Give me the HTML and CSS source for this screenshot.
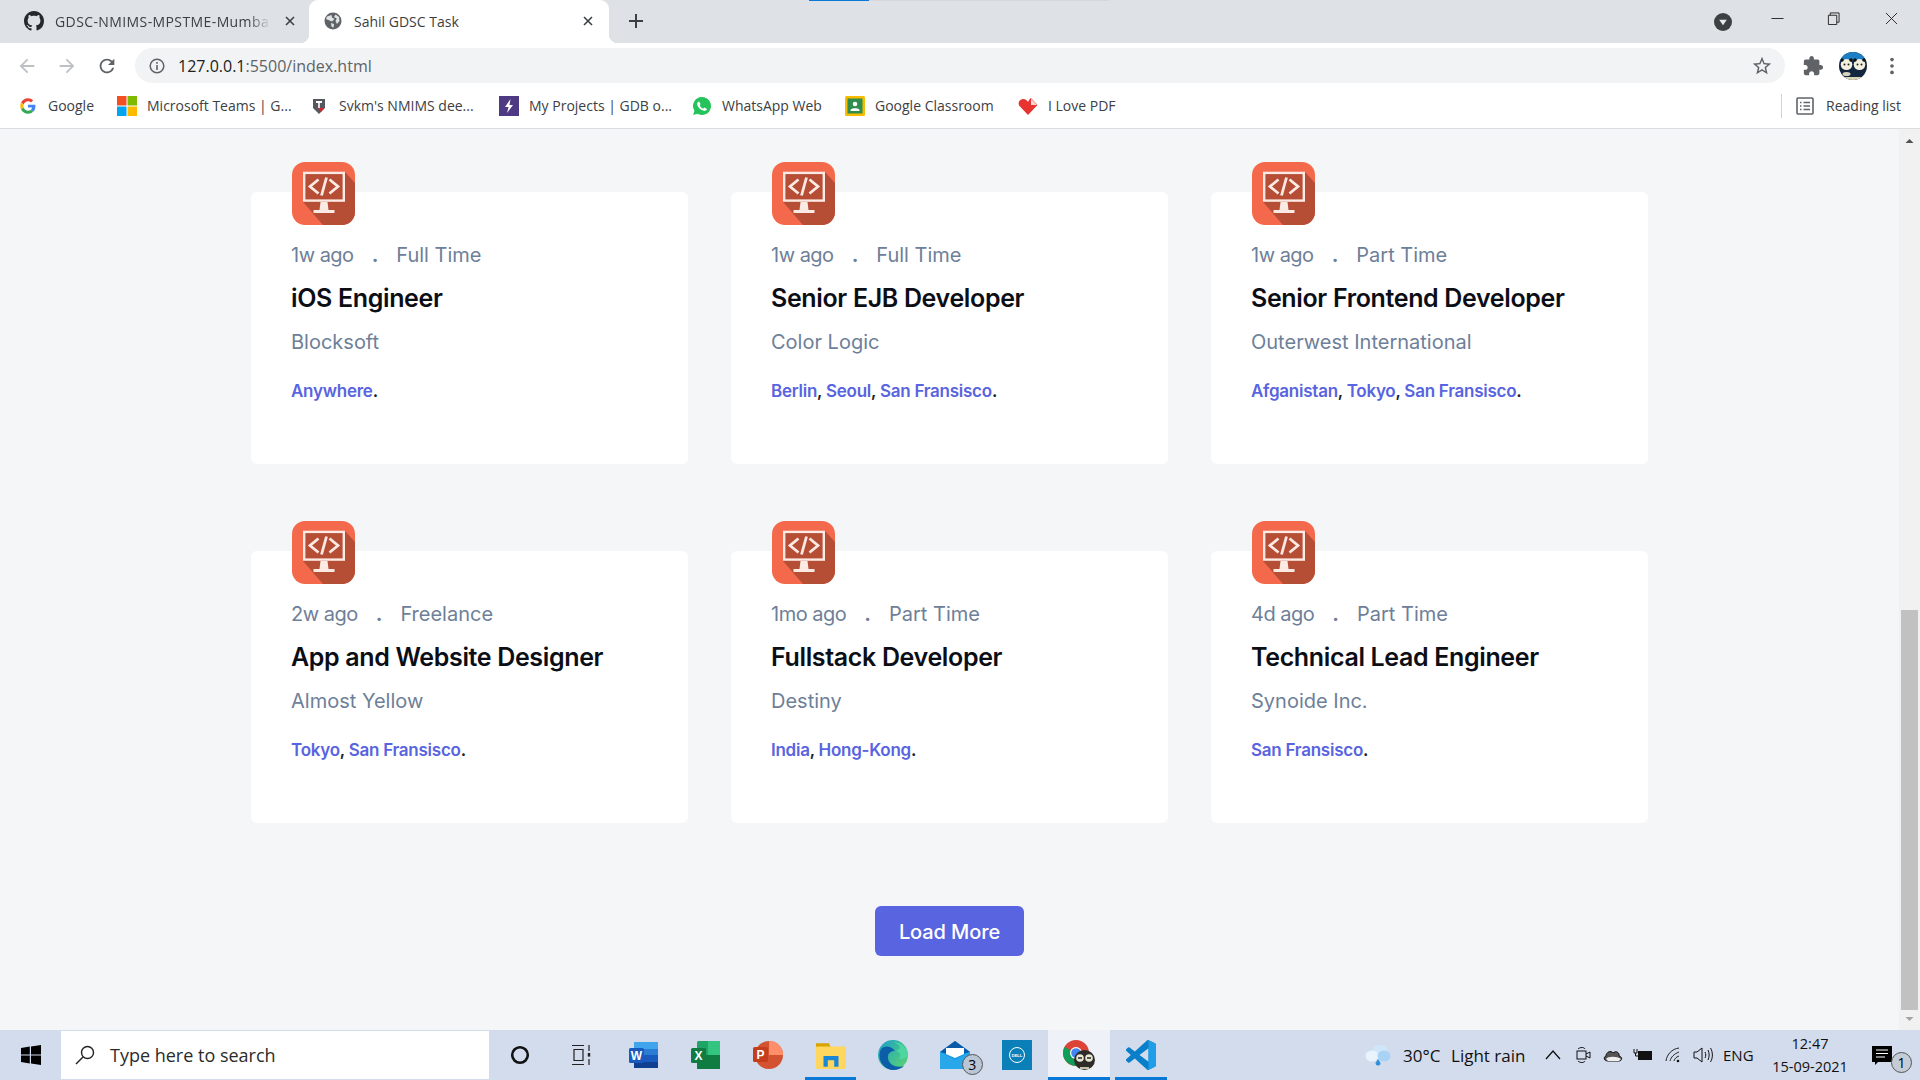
FILE: index.html
```html
<!DOCTYPE html>
<html lang="en">
<head>
<meta charset="utf-8">
<title>Sahil GDSC Task</title>
<link rel="stylesheet" href="styles.css">
</head>
<body>
<svg class="defs" width="0" height="0" aria-hidden="true">
  <symbol id="job" viewBox="0 0 63 63">
    <clipPath id="jobclip"><rect width="63" height="63" rx="13"/></clipPath>
    <g clip-path="url(#jobclip)">
      <rect width="63" height="63" fill="#f4694b"/>
      <path d="M53 10L63 21V63H31L11 40V38H53Z" fill="#b54e35"/>
      <path d="M57 63L63 55V63Z" fill="#5a3a2e"/>
    </g>
    <rect x="12.200" y="10.900" width="39.600" height="27.700" fill="#b54e35" stroke="#fbe9e3" stroke-width="2.400"/>
    <path d="M26.500 17.500L18 24.500L26.500 31.500M37.500 17.500L46 24.500L37.500 31.500M34.500 15.500L29.500 33.500" fill="none" stroke="#fbe9e3" stroke-width="2.800"/>
    <path d="M28.500 40H35.500L36.500 48H27.500Z" fill="#fbe9e3"/>
    <rect x="21.500" y="48" width="21" height="3" fill="#fbe9e3"/>
  </symbol>
</svg>

<header class="tabstrip">
  <div class="tab tab-inactive">
    <svg class="tab-icon" viewBox="0 0 16 16"><path fill="#24292e" d="M8 0C3.58 0 0 3.58 0 8c0 3.54 2.29 6.53 5.47 7.59.4.07.55-.17.55-.38 0-.19-.01-.82-.01-1.49-2.01.37-2.53-.49-2.69-.94-.09-.23-.48-.94-.82-1.13-.28-.15-.68-.52-.01-.53.63-.01 1.08.58 1.23.82.72 1.21 1.87.87 2.33.66.07-.52.28-.87.51-1.07-1.78-.2-3.64-.89-3.64-3.95 0-.87.31-1.59.82-2.15-.08-.2-.36-1.02.08-2.12 0 0 .67-.21 2.2.82.64-.18 1.32-.27 2-.27.68 0 1.36.09 2 .27 1.53-1.04 2.2-.82 2.2-.82.44 1.1.16 1.92.08 2.12.51.56.82 1.27.82 2.15 0 3.07-1.87 3.75-3.65 3.95.29.25.54.73.54 1.48 0 1.07-.01 1.93-.01 2.2 0 .21.15.46.55.38A8.013 8.013 0 0016 8c0-4.42-3.58-8-8-8z"/></svg>
    <span class="tab-title tab-title-fade">GDSC-NMIMS-MPSTME-Mumbai</span>
    <svg class="tab-close" viewBox="0 0 10 10"><path d="M1 1L9 9M9 1L1 9" stroke="#3c4043" stroke-width="1.600"/></svg>
  </div>
  <div class="tab tab-active">
    <svg class="tab-icon" viewBox="0 0 18 18"><circle cx="9" cy="9" r="8.500" fill="#5f6368"/><path d="M3 4.500L7.500 3L8 5.500L10.500 7L8 9.500L5.500 8.500L2 7ZM11.500 2.500L15 5L15.500 9L13 12L11.500 9L12.800 6.500L10 5ZM7 11L10 12L9.500 15.800L7.500 14.500Z" fill="#dfe1e5"/></svg>
    <span class="tab-title">Sahil GDSC Task</span>
    <svg class="tab-close" viewBox="0 0 10 10"><path d="M1 1L9 9M9 1L1 9" stroke="#3c4043" stroke-width="1.600"/></svg>
  </div>
  <svg class="new-tab" viewBox="0 0 14 14"><path d="M7 0V14M0 7H14" stroke="#3c4043" stroke-width="2"/></svg>
  <div class="tabstrip-right">
    <svg class="tab-search" viewBox="0 0 18 18"><circle cx="9" cy="9" r="9" fill="#3c4043"/><path d="M5.200 6.800H12.800L9 12.200Z" fill="#e8eaed"/></svg>
    <svg class="win-btn" viewBox="0 0 14 14"><path d="M0.500 7H13.500" stroke="#222" stroke-width="1"/></svg>
    <svg class="win-btn win-restore" viewBox="0 0 14 14"><path d="M1.500 3.500H10.500V13.500H1.500ZM3.500 3.500V1H13V11H10.500" fill="none" stroke="#222" stroke-width="1"/></svg>
    <svg class="win-btn win-close" viewBox="0 0 14 14"><path d="M1 1L13 13M13 1L1 13" stroke="#222" stroke-width="1"/></svg>
  </div>
  <div class="progress"><span class="progress-bar"></span></div>
</header>

<div class="toolbar">
  <button class="tool"><svg viewBox="0 0 24 24"><path fill="#bdc1c6" d="M20 11H7.830l5.590-5.590L12 4l-8 8 8 8 1.410-1.410L7.830 13H20v-2z"/></svg></button>
  <button class="tool"><svg viewBox="0 0 24 24"><path fill="#bdc1c6" d="M12 4l-1.410 1.410L16.170 11H4v2h12.170l-5.580 5.590L12 20l8-8z"/></svg></button>
  <button class="tool"><svg viewBox="0 0 24 24"><path fill="#5f6368" d="M17.65 6.35A7.958 7.958 0 0012 4c-4.42 0-7.99 3.58-7.99 8s3.57 8 7.99 8c3.73 0 6.84-2.55 7.73-6h-2.08A5.99 5.99 0 0112 18c-3.31 0-6-2.69-6-6s2.69-6 6-6c1.66 0 3.14.69 4.22 1.78L13 11h7V4l-2.35 2.35z"/></svg></button>
  <div class="omnibox">
    <svg class="omni-info" viewBox="0 0 16 16"><circle cx="8" cy="8" r="6.800" fill="none" stroke="#5f6368" stroke-width="1.500"/><path d="M8 7V12M8 4V5.800" stroke="#5f6368" stroke-width="1.600"/></svg>
    <span class="url"><span class="url-host">127.0.0.1</span>:5500/index.html</span>
    <svg class="omni-star" viewBox="0 0 24 24"><path fill="#5f6368" d="M22 9.24l-7.19-.62L12 2 9.19 8.63 2 9.24l5.46 4.73L5.82 21 12 17.27 18.18 21l-1.63-7.03L22 9.24zM12 15.4l-3.76 2.27 1-4.28-3.32-2.88 4.38-.38L12 6.1l1.71 4.04 4.38.38-3.32 2.88 1 4.28L12 15.4z"/></svg>
  </div>
  <div class="toolbar-right">
    <button class="tool"><svg viewBox="0 0 24 24"><path fill="#5f6368" d="M20.5 11H19V7c0-1.1-.9-2-2-2h-4V3.5C13 2.12 11.88 1 10.5 1S8 2.12 8 3.5V5H4c-1.1 0-1.99.9-1.99 2v3.8H3.5c1.49 0 2.7 1.21 2.7 2.7s-1.21 2.7-2.7 2.7H2V20c0 1.1.9 2 2 2h3.8v-1.5c0-1.49 1.21-2.7 2.7-2.7 1.49 0 2.7 1.21 2.7 2.7V22H17c1.1 0 2-.9 2-2v-4h1.5c1.38 0 2.5-1.12 2.5-2.5S21.88 11 20.5 11z"/></svg></button>
    <button class="tool"><svg class="avatar" viewBox="0 0 28 28">
      <clipPath id="avclip"><circle cx="14" cy="14" r="14"/></clipPath>
      <g clip-path="url(#avclip)"><rect width="28" height="28" fill="#12263f"/><rect width="28" height="9" fill="#1a7fc4"/>
      <ellipse cx="7.500" cy="12.500" rx="5.800" ry="5.500" fill="#f4f0de"/><ellipse cx="20.500" cy="12.500" rx="5.800" ry="5.500" fill="#f4f0de"/>
      <circle cx="3" cy="8" r="1.800" fill="#111"/><circle cx="12" cy="8" r="1.800" fill="#111"/><circle cx="16" cy="8" r="1.800" fill="#111"/><circle cx="25" cy="8" r="1.800" fill="#111"/>
      <circle cx="5.500" cy="12.500" r="1" fill="#222"/><circle cx="9.500" cy="12.500" r="1" fill="#222"/><circle cx="18.500" cy="12.500" r="1" fill="#222"/><circle cx="22.500" cy="12.500" r="1" fill="#222"/>
      <ellipse cx="7.500" cy="22" rx="4" ry="2" fill="#d8d4bc"/><rect x="6" y="25" width="16" height="3" fill="#d9d4b4"/></g></svg></button>
    <button class="tool tool-last"><svg viewBox="0 0 24 24"><circle cx="12" cy="5" r="2" fill="#5f6368"/><circle cx="12" cy="12" r="2" fill="#5f6368"/><circle cx="12" cy="19" r="2" fill="#5f6368"/></svg></button>
  </div>
</div>

<nav class="bookmarks">
  <a class="bm"><svg class="bm-icon" viewBox="-7 -7 62 62"><path fill="#EA4335" d="M24 9.5c3.54 0 6.71 1.22 9.21 3.6l6.85-6.85C35.9 2.38 30.47 0 24 0 14.62 0 6.51 5.38 2.56 13.22l7.98 6.19C12.43 13.72 17.74 9.5 24 9.5z"/><path fill="#4285F4" d="M46.98 24.55c0-1.57-.15-3.09-.38-4.55H24v9.02h12.94c-.58 2.96-2.26 5.48-4.78 7.18l7.73 6c4.51-4.18 7.09-10.36 7.09-17.65z"/><path fill="#FBBC05" d="M10.53 28.59c-.48-1.45-.76-2.99-.76-4.59s.27-3.14.76-4.59l-7.98-6.19C.92 16.46 0 20.12 0 24c0 3.88.92 7.54 2.56 10.78l7.97-6.19z"/><path fill="#34A853" d="M24 48c6.48 0 11.93-2.13 15.89-5.81l-7.73-6c-2.15 1.45-4.92 2.3-8.16 2.3-6.26 0-11.57-4.22-13.47-9.91l-7.98 6.19C6.51 42.62 14.62 48 24 48z"/></svg><span>Google</span></a>
  <a class="bm"><svg class="bm-icon" viewBox="0 0 20 20"><rect width="9.500" height="9.500" fill="#f25022"/><rect x="10.500" width="9.500" height="9.500" fill="#7fba00"/><rect y="10.500" width="9.500" height="9.500" fill="#00a4ef"/><rect x="10.500" y="10.500" width="9.500" height="9.500" fill="#ffb900"/></svg><span>Microsoft Teams | G...</span></a>
  <a class="bm"><svg class="bm-icon" viewBox="0 0 20 20"><path d="M4 3H16V12L10 18L4 12Z" fill="#55585e"/><rect x="7" y="5" width="6" height="2" fill="#fff"/><rect x="9" y="7" width="2" height="5" fill="#ddd"/><path d="M9 12H15L12 16Z" fill="#d9232e"/></svg><span>Svkm's NMIMS dee...</span></a>
  <a class="bm"><svg class="bm-icon" viewBox="0 0 20 20"><rect width="20" height="20" fill="#4e3a82"/><path d="M11.500 3L6 11H9.500L8 17L14 9H10.500Z" fill="#fff"/></svg><span>My Projects | GDB o...</span></a>
  <a class="bm"><svg class="bm-icon" viewBox="0 0 20 20"><path d="M10 1A9 9 0 0 0 2.400 14.800L1.200 19L5.500 17.800A9 9 0 1 0 10 1Z" fill="#25c35b"/><path d="M7 5.500L8.600 8L7.800 9.400C8.600 11 9.600 12 11.200 12.600L12.500 11.600L15 13C14.600 14.600 13 15.200 11.600 14.800C8.400 14 6 11.600 5.200 8.800C4.800 7.400 5.600 6 7 5.500Z" fill="#fff"/></svg><span>WhatsApp Web</span></a>
  <a class="bm"><svg class="bm-icon" viewBox="0 0 20 20"><rect width="20" height="20" rx="1.500" fill="#f8bd00"/><rect x="2.500" y="2.500" width="15" height="15" fill="#2f8d4e"/><circle cx="10" cy="8" r="2.300" fill="#fff"/><path d="M5.500 14C5.500 11.600 14.500 11.600 14.500 14V15H5.500Z" fill="#fff"/></svg><span>Google Classroom</span></a>
  <a class="bm"><svg class="bm-icon" viewBox="0 0 20 20"><path d="M10 19L1.500 10C-.5 7.500 1 3 5 3C7.200 3 9 4.200 10 6C11 4.200 11.500 3 13 2L19.500 9L10 19Z" fill="#e73431"/><path d="M13 2.500L19 9H13Z" fill="#fbd6d2"/></svg><span>I Love PDF</span></a>
  <a class="bm bm-reading"><svg class="bm-icon bm-icon-list" viewBox="0 0 18 18"><rect x="1" y="1" width="16" height="16" rx="1" fill="none" stroke="#5f6368" stroke-width="1.600"/><path d="M4 5.500H5.500M4 9H5.500M4 12.500H5.500M7.500 5.500H14M7.500 9H14M7.500 12.500H14" stroke="#5f6368" stroke-width="1.500"/></svg><span>Reading list</span></a>
</nav>

<div class="viewport">
  <main class="page">
    <section class="jobs">
      <article class="job">
        <svg class="job-logo"><use href="#job"/></svg>
        <p class="job-meta"><span class="job-age">1w ago</span><span class="dot">.</span><span>Full Time</span></p>
        <h2 class="job-title">iOS Engineer</h2>
        <p class="job-company">Blocksoft</p>
        <p class="job-places"><a>Anywhere</a>.</p>
      </article>
      <article class="job">
        <svg class="job-logo"><use href="#job"/></svg>
        <p class="job-meta"><span class="job-age">1w ago</span><span class="dot">.</span><span>Full Time</span></p>
        <h2 class="job-title">Senior EJB Developer</h2>
        <p class="job-company">Color Logic</p>
        <p class="job-places"><a>Berlin</a>, <a>Seoul</a>, <a>San Fransisco</a>.</p>
      </article>
      <article class="job">
        <svg class="job-logo"><use href="#job"/></svg>
        <p class="job-meta"><span class="job-age">1w ago</span><span class="dot">.</span><span>Part Time</span></p>
        <h2 class="job-title">Senior Frontend Developer</h2>
        <p class="job-company">Outerwest International</p>
        <p class="job-places"><a>Afganistan</a>, <a>Tokyo</a>, <a>San Fransisco</a>.</p>
      </article>
      <article class="job">
        <svg class="job-logo"><use href="#job"/></svg>
        <p class="job-meta"><span class="job-age">2w ago</span><span class="dot">.</span><span>Freelance</span></p>
        <h2 class="job-title">App and Website Designer</h2>
        <p class="job-company">Almost Yellow</p>
        <p class="job-places"><a>Tokyo</a>, <a>San Fransisco</a>.</p>
      </article>
      <article class="job">
        <svg class="job-logo"><use href="#job"/></svg>
        <p class="job-meta"><span class="job-age">1mo ago</span><span class="dot">.</span><span>Part Time</span></p>
        <h2 class="job-title">Fullstack Developer</h2>
        <p class="job-company">Destiny</p>
        <p class="job-places"><a>India</a>, <a>Hong-Kong</a>.</p>
      </article>
      <article class="job">
        <svg class="job-logo"><use href="#job"/></svg>
        <p class="job-meta"><span class="job-age">4d ago</span><span class="dot">.</span><span>Part Time</span></p>
        <h2 class="job-title">Technical Lead Engineer</h2>
        <p class="job-company">Synoide Inc.</p>
        <p class="job-places"><a>San Fransisco</a>.</p>
      </article>
    </section>
    <button class="load-more">Load More</button>
  </main>
  <aside class="scrollbar">
    <svg class="sb-arrow" viewBox="0 0 10 5"><path d="M0 5L5 0L10 5Z" fill="#505050"/></svg>
    <div class="sb-track"><div class="sb-thumb"></div></div>
    <svg class="sb-arrow" viewBox="0 0 10 5"><path d="M0 0L5 5L10 0Z" fill="#a3a3a3"/></svg>
  </aside>
</div>

<footer class="taskbar">
  <div class="start"><svg viewBox="0 0 20 20"><path fill="#000" d="M0 3L8.800 1.600V9.500H0ZM10 1.400L20 0V9.500H10ZM0 10.600H8.800V18.400L0 17ZM10 10.600H20V20L10 18.600Z"/></svg></div>
  <div class="search">
    <svg class="search-icon" viewBox="0 0 20 20"><circle cx="12.500" cy="7.500" r="6" fill="none" stroke="#222" stroke-width="1.400"/><path d="M8 12L1 19" stroke="#222" stroke-width="1.500"/></svg>
    <span>Type here to search</span>
  </div>
  <div class="slot"><svg class="ic-cortana" viewBox="0 0 20 20"><circle cx="10" cy="10" r="7.800" fill="none" stroke="#111" stroke-width="2.600"/></svg></div>
  <div class="slot"><svg class="ic-task" viewBox="0 0 22 22"><path d="M1 1.500H13M1 20.500H13M3 5.500H12V16.500H3ZM18 1V7M18 15V21" fill="none" stroke="#222" stroke-width="1.200"/><rect x="16.800" y="9" width="2.400" height="3.600" fill="#222"/></svg></div>
  <div class="slot"><svg class="ic-app" viewBox="0 0 30 30"><rect x="5" y="2" width="24" height="26" rx="1.500" fill="#2b7cd3"/><rect x="5" y="2" width="24" height="7" fill="#41a5ee"/><rect x="5" y="15" width="24" height="7" fill="#185abd"/><rect x="5" y="22" width="24" height="6" fill="#103f91"/><rect x="0" y="8" width="15" height="15" rx="1.500" fill="#185abd"/><text class="ic-letter" x="7.500" y="20">W</text></svg></div>
  <div class="slot"><svg class="ic-app" viewBox="0 0 30 30"><rect x="6" y="1" width="23" height="28" rx="1.500" fill="#21a366"/><rect x="17" y="1" width="12" height="14" fill="#33c481"/><rect x="6" y="15" width="23" height="14" fill="#107c41"/><rect x="0" y="8" width="15" height="15" rx="1.500" fill="#107c41"/><text class="ic-letter" x="7.500" y="20">X</text></svg></div>
  <div class="slot"><svg class="ic-app" viewBox="0 0 30 30"><circle cx="16" cy="15" r="14" fill="#d35230"/><path d="M16 1A14 14 0 0 1 30 15H16Z" fill="#ff8f6b"/><rect x="0" y="7" width="15" height="15" rx="1.500" fill="#c43e1c"/><text class="ic-letter" x="7.500" y="19">P</text></svg></div>
  <div class="slot slot-open"><svg class="ic-app" viewBox="0 0 28 28"><path d="M0 3H12L14 7H0Z" fill="#d9a300"/><rect y="6" width="28" height="21" rx="1" fill="#ffd75e"/><path d="M7 25V15H21V25H17V19H11V25Z" fill="#1a86d6"/></svg></div>
  <div class="slot"><svg class="ic-app" viewBox="0 0 30 30"><defs><linearGradient id="edgeg" x1="0" y1="0" x2="1" y2="1"><stop offset="0" stop-color="#1ba0c9"/><stop offset="1" stop-color="#5ed66c"/></linearGradient></defs><circle cx="15" cy="15" r="15" fill="url(#edgeg)"/><path d="M3 9C-2 20 6 30 15 30C20 30 24 28 26 26C20 28 11 26 10 18C9.500 13 13 11 17 11C12 5 6 6 3 9Z" fill="#0d5ea8"/><path d="M17 11C22 11 24 15 21 19C26 19 30 17 30 14C29 7 23 2 15 2C24 5 24 9 17 11Z" fill="#4dd6a0"/></svg></div>
  <div class="slot slot-badge"><svg class="ic-app" viewBox="0 0 30 30"><path d="M0 12L15 1L30 12V29H0Z" fill="#1a9ce8"/><path d="M0 12L15 1L30 12L15 16Z" fill="#0a5aa8"/><path d="M6 8H24V14L15 18L6 14Z" fill="#fff"/><path d="M0 12L15 20L30 12V29H0Z" fill="#28a8ea"/></svg><span class="count">3</span></div>
  <div class="slot"><svg class="ic-app" viewBox="0 0 30 30"><rect width="30" height="30" fill="#0a7fb8"/><circle cx="15" cy="15" r="7.500" fill="none" stroke="#fff" stroke-width="1"/><text class="ic-dell" x="15" y="16.500">DELL</text></svg></div>
  <div class="slot slot-active"><svg class="ic-chrome" viewBox="0 0 32 30"><circle cx="13" cy="13" r="13" fill="#db4437"/><path d="M13 13H26A13 13 0 0 1 13 26Z" fill="#fbbc05"/><path d="M13 13L13 26A13 13 0 0 1 1.500 7Z" fill="#0f9d58"/><circle cx="13" cy="13" r="6" fill="#fff"/><circle cx="13" cy="13" r="4.800" fill="#4285f4"/><ellipse cx="21.500" cy="20" rx="10.500" ry="10" fill="#2d2c28"/><circle cx="17" cy="18" r="3.800" fill="#e9e6d4"/><circle cx="26" cy="18" r="3.800" fill="#e9e6d4"/><circle cx="16" cy="18" r="1" fill="#222"/><circle cx="18" cy="18" r="1" fill="#222"/><circle cx="25" cy="18" r="1" fill="#222"/><circle cx="27" cy="18" r="1" fill="#222"/><rect x="17" y="27" width="9" height="2" fill="#c7c2a6"/></svg></div>
  <div class="slot slot-open"><svg class="ic-app" viewBox="0 0 24 24"><path fill="#0a7fc9" d="M23.15 2.587 18.21.21a1.494 1.494 0 0 0-1.705.29l-9.46 8.63-4.12-3.128a.999.999 0 0 0-1.276.057L.327 7.261A1 1 0 0 0 .326 8.74L3.899 12 .326 15.26a1 1 0 0 0 .001 1.479L1.65 17.94a.999.999 0 0 0 1.276.057l4.12-3.128 9.46 8.63a1.492 1.492 0 0 0 1.704.29l4.942-2.377A1.5 1.5 0 0 0 24 20.06V3.939a1.5 1.5 0 0 0-.85-1.352zm-5.146 14.861L10.826 12l7.178-5.448v10.896z"/><path fill="#1e9ee6" d="M18 .2L23.150 2.587A1.500 1.500 0 0 1 24 3.939V20.060A1.500 1.500 0 0 1 23.150 21.413L18 23.800Z"/></svg></div>

  <div class="tray">
    <svg class="tray-cloud" viewBox="0 0 26 22"><ellipse cx="15" cy="8" rx="8" ry="7" fill="#cfe6fa"/><ellipse cx="7" cy="12" rx="6.500" ry="5.500" fill="#e8f3fc"/><ellipse cx="19" cy="12" rx="6.500" ry="5.500" fill="#a9d3f5"/><path d="M13 15L15.500 19A2.500 2.500 0 1 1 10.500 19Z" fill="#2f8fd8"/></svg>
    <span class="tray-temp">30°C</span>
    <span class="tray-weather">Light rain</span>
    <svg class="tray-ic" viewBox="0 0 18 18"><path d="M2 13L9 5L16 13" fill="none" stroke="#111" stroke-width="1.300"/></svg>
    <svg class="tray-ic" viewBox="0 0 18 18"><rect x="3" y="5" width="9" height="8" fill="none" stroke="#111"/><path d="M12 8L16 6V12L12 10M4 3C6 1 10 1 11 3M4 15C6 17 10 17 11 15" fill="none" stroke="#111"/></svg>
    <svg class="tray-ic" viewBox="0 0 20 18"><path d="M5 15C1 15 0 11 3 10C3 6 8 4 10 7C13 4 17 7 16 10C20 11 19 15 16 15Z" fill="#555" stroke="#111"/><path d="M3 13C5 10 14 10 18 13L16 15H5Z" fill="#eee"/></svg>
    <svg class="tray-ic" viewBox="0 0 20 18"><rect x="5" y="5" width="14" height="9" fill="#111"/><path d="M1 3V7H4V3M2.500 7V10H5" fill="none" stroke="#111"/></svg>
    <svg class="tray-ic" viewBox="0 0 18 18"><path d="M2 15C3 8 8 3 15 2M6 15C7 11 10 8 15 6M10 15C10.500 13 12 11 15 10" fill="none" stroke="#222"/><circle cx="14" cy="15" r="1.300" fill="#111"/></svg>
    <svg class="tray-ic" viewBox="0 0 20 18"><path d="M1 6H4L9 2V16L4 12H1Z" fill="none" stroke="#111"/><path d="M12 6C13 8 13 10 12 12M15 4C16.500 7 16.500 11 15 14M17.500 2C20 6 20 12 17.500 16" fill="none" stroke="#111"/></svg>
    <span class="tray-lang">ENG</span>
    <div class="clock"><span>12:47</span><span>15-09-2021</span></div>
    <div class="notif"><svg viewBox="0 0 20 20"><path d="M0 0H20V16H6L3 19V16H0Z" fill="#000"/><path d="M4 4H16M4 7.500H16M4 11H13" stroke="#fff" stroke-width="1"/></svg><span class="count count-notif">1</span></div>
  </div>
</footer>
</body>
</html>
```

FILE: styles.css
```css
* { box-sizing: border-box; }
html, body { margin: 0; height: 100%; }
body {
  width: 1920px;
  height: 1080px;
  overflow: hidden;
  display: flex;
  flex-direction: column;
  background: #f5f6f8;
  font-family: "Open Sans", "Liberation Sans", sans-serif;
}
.defs { position: absolute; }
svg { display: block; flex: none; }
button { border: 0; background: none; padding: 0; font: inherit; }

/* Browser tab strip */
.tabstrip {
  position: relative;
  height: 43px;
  flex: none;
  display: flex;
  align-items: stretch;
  background: #dee1e6;
  padding-left: 8px;
}
.tab {
  position: relative;
  display: flex;
  align-items: center;
  padding-bottom: 1px;
  font-size: 14px;
  color: #3c4043;
  border-radius: 9px 9px 0 0;
}
.tab-inactive { width: 301px; padding-left: 16px; }
.tab-active { width: 300px; padding-left: 15px; background: #fff; }
.tab-active::before, .tab-active::after {
  content: "";
  position: absolute;
  bottom: 0;
  width: 9px;
  height: 9px;
}
.tab-active::before { left: -9px; background: radial-gradient(circle at 0 0, transparent 9px, #fff 9.5px); }
.tab-active::after { right: -9px; background: radial-gradient(circle at 100% 0, transparent 9px, #fff 9.5px); }
.tab-icon { width: 20px; height: 20px; margin-right: 11px; }
.tab-active .tab-icon { width: 18px; height: 18px; margin-right: 12px; }
.tab-title { flex: 1; white-space: nowrap; overflow: hidden; }
.tab-title-fade {
  letter-spacing: 0.4px;
  -webkit-mask-image: linear-gradient(to right, #000 88%, transparent 98%);
  mask-image: linear-gradient(to right, #000 88%, transparent 98%);
}
.tab-close { width: 10px; height: 10px; margin: 0 16px 0 10px; }
.tab-inactive .tab-close { margin-right: 14px; }
.new-tab { width: 14px; height: 14px; align-self: center; margin: -2px 0 0 20px; }
.tabstrip-right {
  margin-left: auto;
  display: flex;
  align-items: center;
  padding-right: 22px;
}
.tab-search { width: 18px; height: 18px; margin: 1px 39px 0 0; }
.win-btn { width: 13px; height: 13px; margin-top: -6px; }
.win-restore { margin-left: 43px; }
.win-close { margin-left: 45px; }
.progress {
  position: absolute;
  left: 809px;
  top: 0;
  width: 300px;
  height: 1px;
  background: #d5d7db;
}
.progress-bar { display: block; width: 60px; height: 1px; background: #0a78d6; }

/* Toolbar */
.toolbar {
  height: 40px;
  flex: none;
  display: flex;
  align-items: flex-end;
  background: #fff;
  padding-left: 7px;
}
.tool { width: 40px; height: 35px; display: flex; align-items: center; justify-content: center; }
.tool svg { width: 22px; height: 22px; }
.tool-last { width: 38px; }
.tool .avatar { width: 28px; height: 28px; }
.omnibox {
  width: 1650px;
  height: 35px;
  margin-left: 8px;
  display: flex;
  align-items: center;
  padding-left: 14px;
  padding-right: 12px;
  border-radius: 18px;
  background: #f1f3f4;
}
.omni-info { width: 16px; height: 16px; margin-right: 13px; }
.url { font-size: 16px; color: #5f6368; }
.url-host { color: #202124; }
.omni-star { width: 22px; height: 22px; margin-left: auto; }
.toolbar-right { display: flex; margin-left: 8px; }

/* Bookmarks */
.bookmarks {
  height: 46px;
  flex: none;
  display: flex;
  align-items: center;
  padding-left: 18px;
  padding-right: 19px;
  background: #fff;
  border-bottom: 1px solid #dadce0;
  font-size: 14px;
  color: #3c4043;
}
.bm { display: flex; align-items: center; white-space: nowrap; }
.bm:nth-child(1) { width: 99px; }
.bm:nth-child(2) { width: 192px; }
.bm:nth-child(3) { width: 190px; }
.bm:nth-child(4) { width: 193px; }
.bm:nth-child(5) { width: 153px; }
.bm:nth-child(6) { width: 173px; }
.bm-icon { width: 20px; height: 20px; margin-right: 10px; }
.bm-reading {
  margin-left: auto;
  height: 24px;
  padding-left: 14px;
  border-left: 1px solid #d0d2d5;
}
.bm-icon-list { width: 18px; height: 18px; margin-right: 12px; }

/* Page area */
.viewport { flex: 1; min-height: 0; display: flex; }
.page {
  flex: 1;
  display: flex;
  flex-direction: column;
  align-items: center;
  padding-top: 63px;
  font-family: Inter, "Liberation Sans", sans-serif;
}
.jobs {
  display: grid;
  grid-template-columns: repeat(3, 437px);
  grid-auto-rows: 272px;
  column-gap: 43px;
  row-gap: 87px;
}
.job {
  position: relative;
  background: #fff;
  border-radius: 6px;
  padding: 50px 40px 0;
}
.job-logo { position: absolute; left: 41px; top: -30px; width: 63px; height: 63px; }
.job-meta {
  margin: 0;
  display: flex;
  gap: 18px;
  font-size: 20px;
  line-height: 26px;
  color: #6e8098;
}
.job-age { letter-spacing: -0.5px; }
.dot { color: #6e8098; font-weight: 700; }
.job-title {
  margin: 15px 0 0;
  font-size: 25px;
  line-height: 30px;
  font-weight: 600;
  letter-spacing: -0.35px;
  color: #0c0e16;
}
.job-company {
  margin: 16px 0 0;
  font-size: 20px;
  line-height: 26px;
  color: #6e8098;
}
.job-places {
  margin: 24px 0 0;
  font-size: 17px;
  line-height: 24px;
  font-weight: 600;
  letter-spacing: -0.25px;
  color: #19202d;
}
.job-places a { color: #5964e0; }
.load-more {
  width: 149px;
  height: 50px;
  margin-top: 83px;
  padding-top: 1px;
  border-radius: 6px;
  background: #5964e0;
  color: #fff;
  font-size: 20px;
  font-weight: 500;
  letter-spacing: -0.1px;
  font-family: Inter, "Liberation Sans", sans-serif;
}

/* Scrollbar */
.scrollbar {
  width: 21px;
  flex: none;
  display: flex;
  flex-direction: column;
  align-items: center;
  padding: 10px 0 9px;
  background: #f1f1f1;
}
.sb-arrow { width: 9px; height: 4px; }
.sb-track { flex: 1; width: 100%; padding: 0 2px 7px; display: flex; flex-direction: column; justify-content: flex-end; }
.sb-thumb { height: 400px; background: #c1c1c1; }

/* Taskbar */
.taskbar {
  height: 50px;
  flex: none;
  display: flex;
  align-items: stretch;
  background: #d3dcec;
  font-family: "Open Sans", "Liberation Sans", sans-serif;
  color: #111;
}
.start { width: 61px; display: flex; align-items: center; justify-content: center; }
.start svg { width: 20px; height: 20px; }
.search {
  width: 428px;
  margin: 1px 0;
  display: flex;
  align-items: center;
  padding-left: 14px;
  background: #fff;
  font-size: 18px;
  color: #2b2b2b;
}
.search-icon { width: 20px; height: 20px; margin-right: 15px; }
.slot {
  position: relative;
  width: 62.1px;
  display: flex;
  align-items: center;
  justify-content: center;
}
.ic-app { width: 30px; height: 30px; }
.ic-cortana { width: 20px; height: 20px; }
.ic-task { width: 22px; height: 22px; }
.ic-chrome { width: 32px; height: 30px; }
.ic-letter { font: 700 12px "Liberation Sans", sans-serif; fill: #fff; text-anchor: middle; }
.ic-dell { font: 700 4px "Liberation Sans", sans-serif; fill: #fff; text-anchor: middle; }
.slot-open::after, .slot-active::after {
  content: "";
  position: absolute;
  bottom: 0;
  left: 5.5px;
  right: 5.5px;
  height: 3px;
  background: #0a78d6;
}
.slot-active { background: #eef1f8; }
.slot-active::after { left: 0; right: 0; }
.count {
  position: absolute;
  right: 3px;
  top: 24px;
  width: 21px;
  height: 21px;
  border-radius: 50%;
  border: 1px solid #555;
  background: #b9c6d6;
  font-size: 14px;
  line-height: 19px;
  text-align: center;
  color: #000;
}
.tray { flex: 1; display: flex; align-items: center; padding-left: 193px; }
.tray-cloud { width: 26px; height: 22px; margin-right: 12px; }
.tray-temp { font-size: 17px; width: 48px; white-space: nowrap; }
.tray-weather { font-size: 17px; width: 92px; white-space: nowrap; }
.tray-ic { width: 20px; height: 18px; margin-right: 10px; }
.tray-lang { font-size: 15px; width: 38px; }
.clock {
  width: 98px;
  display: flex;
  flex-direction: column;
  align-items: center;
  gap: 4px;
  font-size: 14.5px;
  line-height: 19px;
}
.notif { position: relative; margin-left: 13px; }
.notif svg { width: 20px; height: 20px; margin-top: 2px; }
.count-notif { right: -20px; top: 8px; background: #c4ccd8; }
```
